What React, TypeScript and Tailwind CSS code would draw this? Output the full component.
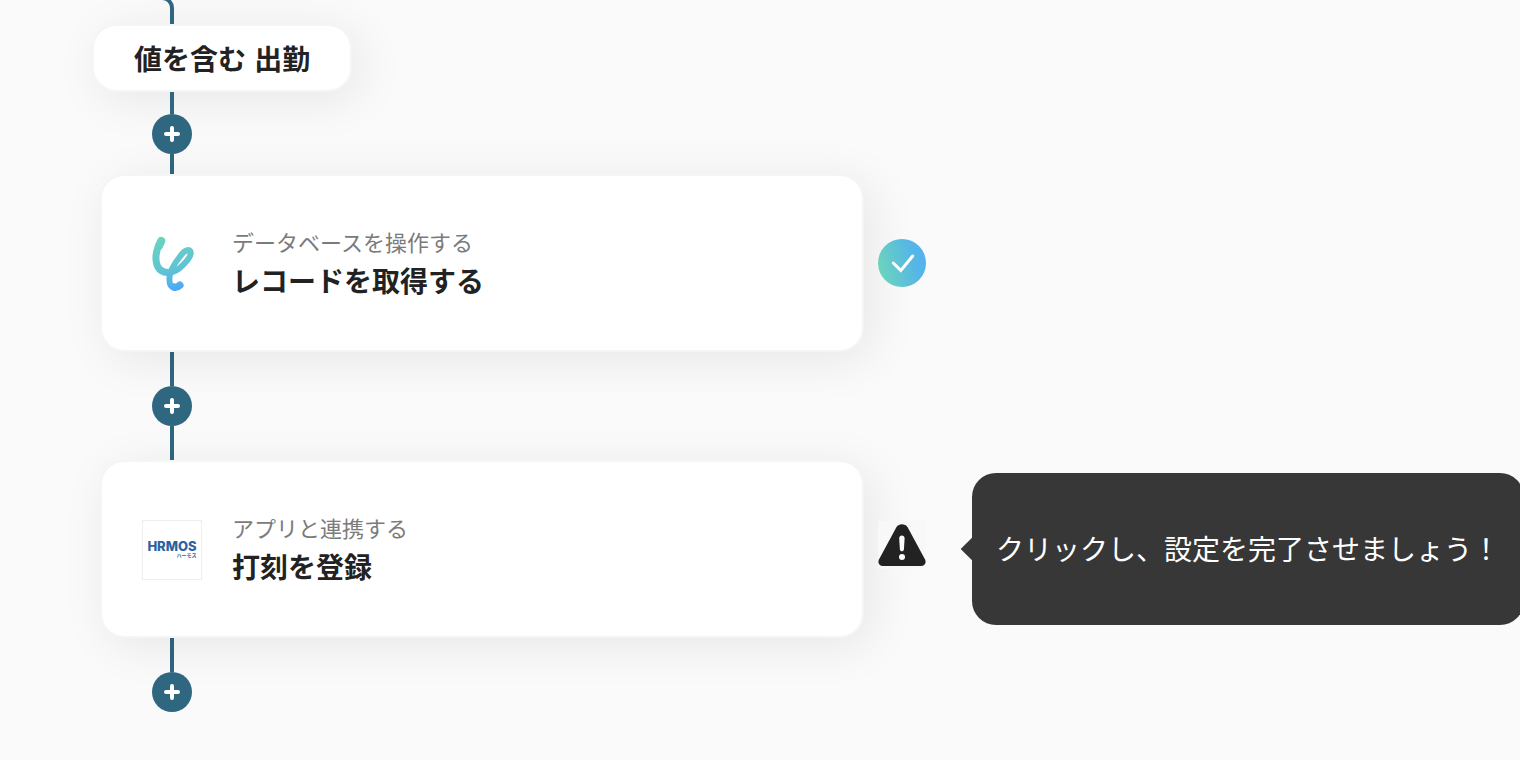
import type { ReactNode } from 'react';

const panel = 'border-2 border-[#f5f5f5] bg-white bg-clip-padding shadow-[8px_8px_48px_rgba(0,0,0,0.08)]';

function Line({ className }: { className: string }) {
  return <div className={`ml-[170px] w-1 bg-[#2f6781] ${className}`} />;
}

function AddButton() {
  return (
    <button type="button" aria-label="追加" className="relative ml-[152px] flex size-10 items-center justify-center rounded-full bg-[#2f6781]">
      <svg viewBox="0 0 16 16" className="size-4" fill="none" stroke="#fff" strokeWidth="4" strokeLinecap="round">
        <path d="M8 2v12M2 8h12" />
      </svg>
    </button>
  );
}

function YoomLogo() {
  return (
    <svg viewBox="0 0 60 60" className="size-[60px] shrink-0" fill="none" aria-hidden="true">
      <defs>
        <linearGradient id="yoom" gradientUnits="userSpaceOnUse" x1="22" y1="2" x2="34" y2="56">
          <stop offset="0" stopColor="#6bd4bf" />
          <stop offset="0.6" stopColor="#5fc4d4" />
          <stop offset="0.85" stopColor="#55b4ea" />
          <stop offset="1" stopColor="#4ea6f5" />
        </linearGradient>
      </defs>
      <g stroke="url(#yoom)" strokeLinecap="round" strokeLinejoin="round">
        <path strokeWidth="8" d="M19.300 7L17 12" />
        <path strokeWidth="7" d="M18.800 7.500C15 14 13 22 14.500 29C16 36 21 39 27.500 38.500" />
        <path strokeWidth="6" d="M27.500 38.500C36 38.500 49 24 48.800 18.500C48 14 42.500 16 38 22.500C32.500 29.500 28 36 27.500 43C27 50 28.500 53 32 53.500" />
        <path strokeWidth="7.500" d="M32 53C34.500 53.500 36.500 52.500 37.800 51.300" />
      </g>
    </svg>
  );
}

function HrmosLogo() {
  return (
    <span className="flex size-[60px] shrink-0 flex-col items-center justify-center border border-[#eeeeee] bg-white text-[#2c62a0]">
      <span className="flex flex-col font-bold">
        <span className="font-[Inter,sans-serif] text-[13px] leading-[10px] font-extrabold">HRMOS</span>
        <span className="text-right text-[5px] leading-2">ハーモス</span>
      </span>
    </span>
  );
}

function DoneIcon() {
  return (
    <svg viewBox="0 0 48 48" className="size-12 shrink-0" fill="none" role="img" aria-label="完了">
      <defs>
        <linearGradient id="done" x1="0" y1="0.65" x2="1" y2="0.35">
          <stop offset="0.05" stopColor="#6ad3be" />
          <stop offset="0.75" stopColor="#55b6e6" />
          <stop offset="1" stopColor="#55b2ee" />
        </linearGradient>
      </defs>
      <circle cx="24" cy="24" r="24" fill="url(#done)" />
      <path d="M15.300 24l7.500 7.500L34.700 17" stroke="#fff" strokeWidth="3" strokeLinecap="round" />
    </svg>
  );
}

function WarningIcon() {
  return (
    <svg viewBox="0 0 48 48" className="mb-2 size-12 shrink-0 bg-[#f8f8f8]" role="img" aria-label="未設定">
      <path d="M18.500 6C21 2.200 27 2.200 29.500 6L46.500 37.500C49 41 47 45 43 45H5C1 45-1 41 1.500 37.500Z" fill="#222" />
      <path d="M21.200 17.500c-.2-4 5.600-4 5.400 0l-.7 11c-.2 2.400-3.800 2.400-4 0z" fill="#fff" />
      <circle cx="24" cy="36" r="3" fill="#fff" />
    </svg>
  );
}

function Hint({ children }: { children: ReactNode }) {
  return (
    <div role="tooltip" className="relative ml-8 flex h-[152px] shrink-0 items-center rounded-3xl bg-[#373737] px-6 pb-0.5 text-[28px] whitespace-nowrap text-white">
      <span className="absolute top-1/2 -left-2 size-4 -translate-y-1/2 rotate-45 bg-[#373737]" />
      <span className="relative">{children}</span>
    </div>
  );
}

type StepProps = { logo: ReactNode; kind: string; title: string; children: ReactNode };

function Step({ logo, kind, title, children }: StepProps) {
  return (
    <div className="ml-[100px] flex items-center gap-3.5">
      <button type="button" className={`flex h-[178px] w-[764px] shrink-0 items-center gap-[30px] rounded-3xl px-10 pt-0.5 text-left ${panel}`}>
        {logo}
        <span className="flex flex-col">
          <span className="text-[22px] leading-8 text-[#7b7b7b]">{kind}</span>
          <span className="text-[28px] leading-[46px] font-bold text-[#222222]">{title}</span>
        </span>
      </button>
      {children}
    </div>
  );
}

export default function App() {
  return (
    <main className="min-h-screen overflow-hidden bg-[#fafafa] pb-12 font-['Noto_Sans_CJK_JP',sans-serif]">
      <svg viewBox="0 0 40 24" className="ml-[152px] block h-6 w-10" fill="none" stroke="#2f6781" strokeWidth="4" aria-hidden="true">
        <path d="M10-2a10 10 0 0 1 10 10v16" />
      </svg>
      <div className={`ml-[92px] flex h-[68px] w-fit items-center rounded-3xl px-10 text-[28px] font-bold text-[#222222] ${panel}`}>
        <p>
          値を含む <span className="ml-0.5">出勤</span>
        </p>
      </div>
      <Line className="h-[22px]" />
      <AddButton />
      <Line className="h-5" />
      <Step logo={<YoomLogo />} kind="データベースを操作する" title="レコードを取得する">
        <DoneIcon />
      </Step>
      <Line className="h-[34px]" />
      <AddButton />
      <Line className="h-[34px]" />
      <Step logo={<HrmosLogo />} kind="アプリと連携する" title="打刻を登録">
        <WarningIcon />
        <Hint>クリックし、設定を完了させましょう！</Hint>
      </Step>
      <Line className="h-[34px]" />
      <AddButton />
    </main>
  );
}
